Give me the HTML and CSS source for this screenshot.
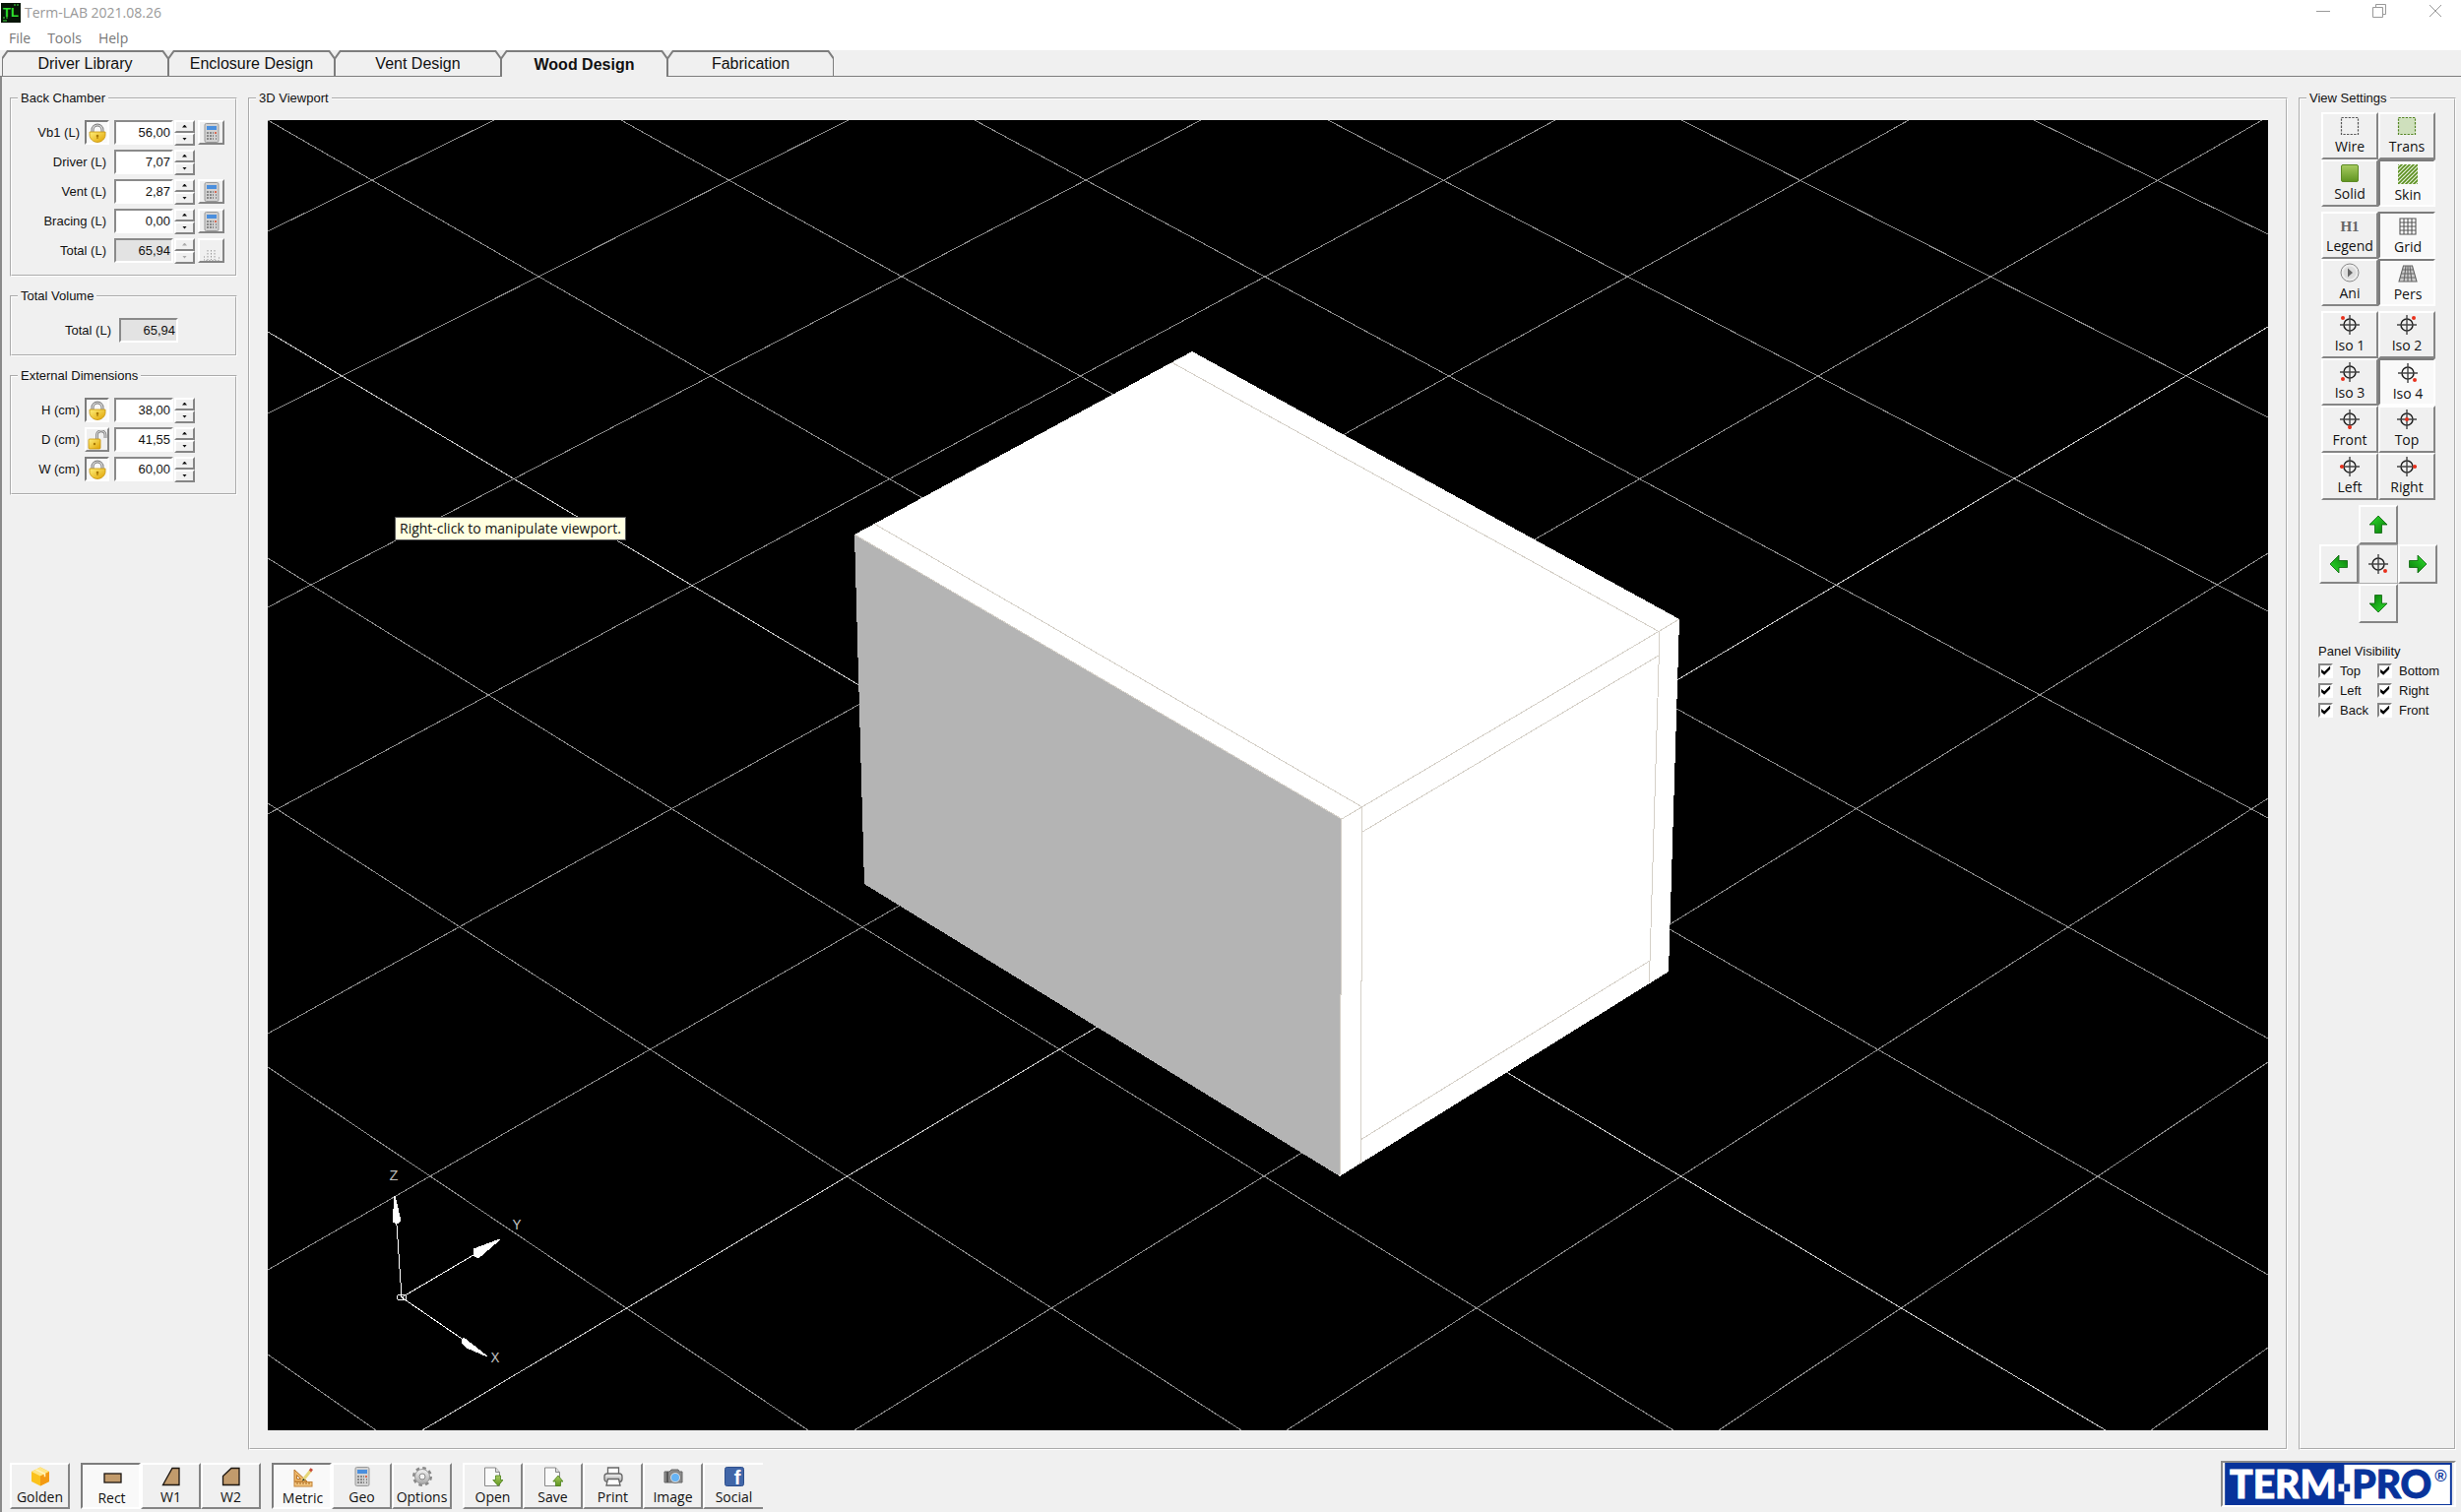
FILE: index.html
```html
<!DOCTYPE html>
<html lang="en">

<head>
    <meta charset="UTF-8">
    <meta name="viewport" content="width=device-width, initial-scale=1.0">
    <title>Term-LAB 2021.08.26</title>
    <link rel="stylesheet" href="styles.css">
</head>

<body>
    <!-- shared icons -->
    <svg class="defs" aria-hidden="true">
        <defs>
            <linearGradient id="gold" x1="0" y1="0" x2="1" y2="1">
                <stop offset="0" stop-color="#ffef7a" />
                <stop offset="1" stop-color="#dfa100" />
            </linearGradient>
            <linearGradient id="green" x1="0" y1="0" x2="0" y2="1">
                <stop offset="0" stop-color="#a9cc62" />
                <stop offset="1" stop-color="#5f9420" />
            </linearGradient>
            <linearGradient id="arrowfill" x1="0" y1="0" x2="1" y2="1">
                <stop offset="0" stop-color="#2fe02f" />
                <stop offset="1" stop-color="#087808" />
            </linearGradient>
            <linearGradient id="silver" x1="0" y1="0" x2="0" y2="1">
                <stop offset="0" stop-color="#f4f4f4" />
                <stop offset="1" stop-color="#a8a8a8" />
            </linearGradient>
            <pattern id="hatch" width="4" height="4" patternUnits="userSpaceOnUse">
                <path d="M-1 1l2-2M0 4l4-4M3 5l2-2" stroke="#5b8f1e" stroke-width="1.6" />
            </pattern>
            <symbol id="lock" viewBox="0 0 20 20">
                <path d="M5 10V7a5 5 0 0 1 10 0v3" fill="none" stroke="#777" stroke-width="3" />
                <path d="M5 10V7a5 5 0 0 1 10 0v3" fill="none" stroke="#ddd" stroke-width="1.2" />
                <path d="M2 9h16v3c0 4-4 7.500-8 7.500S2 16 2 12z" fill="url(#gold)" stroke="#c79208" stroke-width=".8" />
                <circle cx="10" cy="13" r="1.300" fill="#a87800" />
                <path d="M10 13v3" stroke="#a87800" stroke-width="1.200" />
            </symbol>
            <symbol id="unlock" viewBox="0 0 20 20">
                <path d="M9.500 9V5a4.200 4.200 0 0 1 8.500 0v3" fill="none" stroke="#777" stroke-width="2.800" />
                <path d="M9.500 9V5a4.200 4.200 0 0 1 8.500 0v3" fill="none" stroke="#ddd" stroke-width="1.200" />
                <rect x="1" y="9" width="12" height="10" rx="1" fill="url(#gold)" stroke="#c79208" stroke-width=".8" />
                <circle cx="7" cy="14" r="1.200" fill="#a87800" />
            </symbol>
            <symbol id="calc" viewBox="0 0 20 20">
                <rect x="3" y=".5" width="14" height="19" rx="1.500" fill="#d2d2d2" stroke="#999" />
                <rect x="5" y="3" width="10" height="4" fill="#4b8fdd" />
                <path d="M5 10h2m1 0h2m1 0h1m2 0h1M5 13h2m1 0h2m1 0h1m2 0h1M5 16h2m1 0h2m1 0h1m2 0h1" stroke="#888" stroke-width="2" />
                <path d="M13 10h2" stroke="#d86b55" stroke-width="2" />
            </symbol>
            <symbol id="calc-off" viewBox="0 0 20 20">
                <path d="M6 9v10M9.500 9v10M13 9v10" stroke="#999" stroke-dasharray="1.500 1.500" />
                <path d="M2.500 15v4.500h15V15" fill="none" stroke="#bbb" stroke-dasharray="2 1" />
            </symbol>
            <symbol id="wire" viewBox="0 0 20 20">
                <rect x="1.500" y="1.500" width="17" height="17" fill="none" stroke="#555" stroke-width="1.200" stroke-dasharray="2.300 1.300" />
            </symbol>
            <symbol id="trans" viewBox="0 0 20 20">
                <rect x="1.500" y="1.500" width="17" height="17" fill="#cfe0bd" stroke="#538522" stroke-width="1.200" stroke-dasharray="2.300 1.300" />
            </symbol>
            <symbol id="solid" viewBox="0 0 20 20">
                <rect x="1.500" y="1.500" width="17" height="17" rx="1.500" fill="url(#green)" stroke="#5d8b25" />
            </symbol>
            <symbol id="skin" viewBox="0 0 20 20">
                <rect width="20" height="20" fill="#e7efdc" />
                <rect width="20" height="20" fill="url(#hatch)" />
            </symbol>
            <symbol id="legend" viewBox="0 0 20 20">
                <text class="glyph-legend" x="10" y="16" text-anchor="middle">H1</text>
            </symbol>
            <symbol id="grid" viewBox="0 0 20 20">
                <path d="M2 2h16v16H2zM6 2v16M10 2v16M14 2v16M2 6h16M2 10h16M2 14h16" fill="#fff" stroke="#555" stroke-width="1.100" />
            </symbol>
            <symbol id="pers" viewBox="0 0 20 20">
                <path d="M5.500 2h9L19 18H1zM8 2L6 18M10 2v16M12 2l2 16M4.500 6h11M3.500 10h13M2.500 14h15" fill="#ccc" stroke="#666" stroke-width="1.100" />
            </symbol>
            <symbol id="play" viewBox="0 0 20 20">
                <circle cx="10" cy="10" r="9" fill="#eee" stroke="#888" />
                <circle cx="10" cy="10" r="6.500" fill="#ddd" />
                <path d="M8 5.500l5 4.500-5 4.500z" fill="#666" />
            </symbol>
            <symbol id="target" viewBox="0 0 20 20">
                <circle cx="10" cy="10" r="6" fill="none" stroke="#222" stroke-width="1.500" />
                <path d="M10 0v20M0 10h20" stroke="#444" stroke-width="1.400" />
            </symbol>
            <symbol id="arrow" viewBox="0 0 20 20">
                <path d="M10 1l9 9h-5.500v8.500h-7V10H1z" fill="url(#arrowfill)" stroke="#0a650a" stroke-width=".8" />
            </symbol>
            <symbol id="golden" viewBox="0 0 20 20">
                <path d="M10 .5l9 4.500v10l-9 4.500L1 15V5z" fill="#fbc21c" />
                <path d="M10 .5l9 4.500-9 4.500L1 5z" fill="#ffe684" />
                <path d="M10 9.500l9-4.500v10l-9 4.500z" fill="#f39a13" />
                <path d="M5.500 2.800l9 4.500v3" fill="none" stroke="#fff4bd" stroke-width="1.500" />
            </symbol>
            <symbol id="rect" viewBox="0 0 20 20">
                <rect x="2" y="6" width="17" height="9" fill="#c29b6c" stroke="#1b1510" stroke-width="1.300" />
            </symbol>
            <symbol id="w1" viewBox="0 0 20 20">
                <path d="M11 1.500h7v17H1.500z" fill="#c29b6c" stroke="#1b1510" stroke-width="1.300" />
            </symbol>
            <symbol id="w2" viewBox="0 0 20 20">
                <path d="M10 1.500h8v17H1.500V9.500z" fill="#c29b6c" stroke="#1b1510" stroke-width="1.300" />
            </symbol>
            <symbol id="metric" viewBox="0 0 20 20">
                <path d="M1 2l13 12H1z" fill="#f0b96a" stroke="#b8742a" />
                <path d="M3.500 7.500l4 4h-4z" fill="#f8f8f8" stroke="#b8742a" />
                <rect x="1" y="14.500" width="18" height="4.500" fill="#f3c680" stroke="#c38336" />
                <path d="M4 15v2m3-2v2m3-2v2m3-2v2m3-2v2" stroke="#a5651e" />
                <path d="M9.500 13l8-10" stroke="#e6d77a" stroke-width="3" />
                <path d="M17 3.500l1.800-2.300" stroke="#c94c3a" stroke-width="3" />
                <path d="M9 13.500l1-2.500 2 1.500z" fill="#222" />
            </symbol>
            <symbol id="gear" viewBox="0 0 20 20">
                <circle cx="10" cy="10" r="8" fill="none" stroke="#888" stroke-width="4" stroke-dasharray="3.300 2.983" />
                <circle cx="10" cy="10" r="7.500" fill="url(#silver)" stroke="#999" />
                <circle cx="10" cy="10" r="3" fill="#f4f4f4" stroke="#888" />
            </symbol>
            <symbol id="open" viewBox="0 0 20 20">
                <path d="M1.500 1h11l4 4.500v14h-15z" fill="#fafafa" stroke="#888" />
                <path d="M12.500 1v4.500h4" fill="#ddd" stroke="#888" />
                <path d="M12.500 9h5v4.500h2.500L15 19.500 9.800 13.500h2.700z" fill="url(#green)" stroke="#4a8218" stroke-width=".8" />
            </symbol>
            <symbol id="save" viewBox="0 0 20 20">
                <path d="M1.500 1h11l4 4.500v14h-15z" fill="#fafafa" stroke="#888" />
                <path d="M12.500 1v4.500h4" fill="#ddd" stroke="#888" />
                <path d="M12.500 19.500h5V15H20l-5-6-5.200 6h2.700z" fill="url(#green)" stroke="#4a8218" stroke-width=".8" />
            </symbol>
            <symbol id="print" viewBox="0 0 20 20">
                <path d="M4.500 8V1h11v7" fill="#fff" stroke="#666" stroke-width="1.300" />
                <rect x="1" y="7" width="18" height="8.500" rx="3" fill="url(#silver)" stroke="#666" stroke-width="1.300" />
                <path d="M4.500 12.500h11l1.500 6.500H3z" fill="#fff" stroke="#666" stroke-width="1.300" />
            </symbol>
            <symbol id="camera" viewBox="0 0 20 20">
                <path d="M1 5h5l2-2h7l1 2h3v11H1z" fill="#8b8b8b" stroke="#666" />
                <path d="M4 5v11" stroke="#555" stroke-width="2" />
                <circle cx="12" cy="11" r="5.500" fill="#dedede" stroke="#777" />
                <circle cx="12" cy="11" r="4" fill="#66b3f4" />
            </symbol>
            <symbol id="facebook" viewBox="0 0 20 20">
                <rect x=".5" y=".5" width="19" height="19" rx="2" fill="#4166a8" stroke="#2e4f8c" />
                <text class="glyph-f" x="13" y="18" text-anchor="middle">f</text>
            </symbol>
        </defs>
    </svg>

    <header class="titlebar">
        <svg class="app-icon" viewBox="0 0 20 20">
            <rect width="20" height="20" fill="#061406" />
            <path d="M13 2h2m1 0h2M2 15h2m1 0h2M2 18h4" stroke="#2d9a2d" stroke-width="1.500" />
            <text class="glyph-app" x="10" y="14" text-anchor="middle">TL</text>
        </svg>
        <span class="title">Term-LAB 2021.08.26</span>
        <div class="window-buttons">
            <button aria-label="Minimize"><svg viewBox="0 0 14 14"><path d="M0 7.500h14" /></svg></button>
            <button aria-label="Restore"><svg viewBox="0 0 14 14"><path d="M.5 3.500h10v10H.5zM3.500 3.500v-3h10v10h-3" /></svg></button>
            <button aria-label="Close"><svg viewBox="0 0 14 14"><path d="M1 1l12 12M13 1L1 13" /></svg></button>
        </div>
    </header>
    <nav class="menubar">
        <button>File</button>
        <button>Tools</button>
        <button>Help</button>
    </nav>
    <div class="tabs" role="tablist">
        <button class="tab" role="tab">Driver Library</button>
        <button class="tab" role="tab">Enclosure Design</button>
        <button class="tab" role="tab">Vent Design</button>
        <button class="tab active" role="tab" aria-selected="true">Wood Design</button>
        <button class="tab" role="tab">Fabrication</button>
    </div>

    <main class="page">
        <aside class="left">
            <fieldset class="group">
                <legend>Back Chamber</legend>
                <div class="row">
                    <div class="name"><label for="vb1">Vb1 (L)</label><button class="btn lock pressed" aria-label="Lock Vb1"><svg><use href="#lock" /></svg></button></div>
                    <input class="value" id="vb1" type="text" value="56,00">
                    <div class="spin"><button aria-label="Up"></button><button aria-label="Down"></button></div>
                    <button class="btn calc" aria-label="Calculate Vb1"><svg><use href="#calc" /></svg></button>
                </div>
                <div class="row">
                    <div class="name"><label for="driver">Driver (L)</label></div>
                    <input class="value" id="driver" type="text" value="7,07">
                    <div class="spin"><button aria-label="Up"></button><button aria-label="Down"></button></div>
                </div>
                <div class="row">
                    <div class="name"><label for="vent">Vent (L)</label></div>
                    <input class="value" id="vent" type="text" value="2,87">
                    <div class="spin"><button aria-label="Up"></button><button aria-label="Down"></button></div>
                    <button class="btn calc" aria-label="Calculate vent"><svg><use href="#calc" /></svg></button>
                </div>
                <div class="row">
                    <div class="name"><label for="bracing">Bracing (L)</label></div>
                    <input class="value" id="bracing" type="text" value="0,00">
                    <div class="spin"><button aria-label="Up"></button><button aria-label="Down"></button></div>
                    <button class="btn calc" aria-label="Calculate bracing"><svg><use href="#calc" /></svg></button>
                </div>
                <div class="row">
                    <div class="name"><label for="total1">Total (L)</label></div>
                    <input class="value" id="total1" type="text" value="65,94" readonly>
                    <div class="spin"><button aria-label="Up" disabled></button><button aria-label="Down" disabled></button></div>
                    <button class="btn calc" aria-label="Calculate total" disabled><svg><use href="#calc-off" /></svg></button>
                </div>
            </fieldset>

            <fieldset class="group">
                <legend>Total Volume</legend>
                <div class="row">
                    <div class="name wide"><label for="total2">Total (L)</label></div>
                    <input class="value" id="total2" type="text" value="65,94" readonly>
                </div>
            </fieldset>

            <fieldset class="group">
                <legend>External Dimensions</legend>
                <div class="row">
                    <div class="name"><label for="dimh">H (cm)</label><button class="btn lock pressed" aria-label="Lock height"><svg><use href="#lock" /></svg></button></div>
                    <input class="value" id="dimh" type="text" value="38,00">
                    <div class="spin"><button aria-label="Up"></button><button aria-label="Down"></button></div>
                </div>
                <div class="row">
                    <div class="name"><label for="dimd">D (cm)</label><button class="btn lock" aria-label="Lock depth"><svg><use href="#unlock" /></svg></button></div>
                    <input class="value" id="dimd" type="text" value="41,55">
                    <div class="spin"><button aria-label="Up"></button><button aria-label="Down"></button></div>
                </div>
                <div class="row">
                    <div class="name"><label for="dimw">W (cm)</label><button class="btn lock pressed" aria-label="Lock width"><svg><use href="#lock" /></svg></button></div>
                    <input class="value" id="dimw" type="text" value="60,00">
                    <div class="spin"><button aria-label="Up"></button><button aria-label="Down"></button></div>
                </div>
            </fieldset>
        </aside>

        <fieldset class="group center">
            <legend>3D Viewport</legend>
            <div class="viewport">
                <svg class="scene" viewBox="272 122 2032 1331" preserveAspectRatio="xMidYMid slice">
                    <!-- floor grid -->
                    <path class="floor" d="M272 122L2304 1295M631 122L2304 1055M990 122L2304 831M1349 122L2304 621M1708 122L2304 424M2066 122L2304 238M272 567L1700 1453M272 816L1261 1453M272 1084L821 1453M272 1376L382 1453" />
                    <path class="floor" d="M502 122L272 235M862 122L272 420M1220 122L272 617M1580 122L272 827M1939 122L272 1050M2298 122L272 1290M2304 562L868 1453M2304 811L1307 1453M2304 1079L1746 1453M2304 1369L2185 1453" />
                    <path class="floor main" d="M272 337L2139 1453M2304 332L429 1453" />
                    <!-- enclosure -->
                    <path fill="#fff" d="M1211 357L1706 629 1695 987 1361 1195 878 898 868 543z" />
                    <path fill="#b4b4b4" d="M868 543L1363 832 1361 1195 878 898z" />
                    <path class="edge" d="M1190 368L1686 642L1676 976L1675 999M888 532L1384 820L1382 1182M1363 832L1706 629M1685 666L1384 845M1676 976L1382 1158M868 543L1363 832L1361 1195" />
                    <!-- axes -->
                    <g class="axes">
                        <path d="M408 1318L401 1215M408 1318L508 1259M408 1318L494 1377" />
                        <path class="tip" d="M401 1215l6 25-3 3-5-2zM508 1259l-27 10 1 7 4 2zM495 1378l-24-19-2 5 5 5z" />
                        <ellipse cx="408" cy="1318" rx="5" ry="3" />
                        <text x="400" y="1199">Z</text>
                        <text x="525" y="1249">Y</text>
                        <text x="503" y="1384">X</text>
                    </g>
                </svg>
                <div class="tooltip" role="tooltip">Right-click to manipulate viewport.</div>
            </div>
        </fieldset>

        <fieldset class="group right">
            <legend>View Settings</legend>
            <div class="tools">
                <button class="btn tool"><svg><use href="#wire" /></svg>Wire</button>
                <button class="btn tool"><svg><use href="#trans" /></svg>Trans</button>
                <button class="btn tool"><svg><use href="#solid" /></svg>Solid</button>
                <button class="btn tool pressed"><svg><use href="#skin" /></svg>Skin</button>
            </div>
            <div class="tools">
                <button class="btn tool"><svg><use href="#legend" /></svg>Legend</button>
                <button class="btn tool pressed"><svg><use href="#grid" /></svg>Grid</button>
                <button class="btn tool"><svg><use href="#play" /></svg>Ani</button>
                <button class="btn tool pressed"><svg><use href="#pers" /></svg>Pers</button>
            </div>
            <div class="tools">
                <button class="btn tool"><svg viewBox="0 0 20 20"><use href="#target" /><circle class="dot" cx="3" cy="3" r="2" /></svg>Iso 1</button>
                <button class="btn tool"><svg viewBox="0 0 20 20"><use href="#target" /><circle class="dot" cx="17" cy="3" r="2" /></svg>Iso 2</button>
                <button class="btn tool"><svg viewBox="0 0 20 20"><use href="#target" /><circle class="dot" cx="3" cy="17" r="2" /></svg>Iso 3</button>
                <button class="btn tool pressed"><svg viewBox="0 0 20 20"><use href="#target" /><circle class="dot" cx="17" cy="17" r="2" /></svg>Iso 4</button>
                <button class="btn tool"><svg viewBox="0 0 20 20"><use href="#target" /><circle class="dot" cx="10" cy="18" r="2" /></svg>Front</button>
                <button class="btn tool"><svg viewBox="0 0 20 20"><use href="#target" /><circle class="dot" cx="10" cy="10" r="2" /></svg>Top</button>
                <button class="btn tool"><svg viewBox="0 0 20 20"><use href="#target" /><circle class="dot" cx="2" cy="10" r="2" /></svg>Left</button>
                <button class="btn tool"><svg viewBox="0 0 20 20"><use href="#target" /><circle class="dot" cx="18" cy="10" r="2" /></svg>Right</button>
            </div>
            <div class="pad">
                <button class="btn up" aria-label="Rotate up"><svg><use href="#arrow" /></svg></button>
                <button class="btn west" aria-label="Rotate left"><svg><use href="#arrow" /></svg></button>
                <button class="btn home" aria-label="Reset view"><svg viewBox="0 0 20 20"><use href="#target" /><circle class="dot" cx="17" cy="17" r="2" /></svg></button>
                <button class="btn east" aria-label="Rotate right"><svg><use href="#arrow" /></svg></button>
                <button class="btn down" aria-label="Rotate down"><svg><use href="#arrow" /></svg></button>
            </div>
            <div class="panels">
                <span class="caption">Panel Visibility</span>
                <label><input type="checkbox" checked>Top</label>
                <label><input type="checkbox" checked>Bottom</label>
                <label><input type="checkbox" checked>Left</label>
                <label><input type="checkbox" checked>Right</label>
                <label><input type="checkbox" checked>Back</label>
                <label><input type="checkbox" checked>Front</label>
            </div>
        </fieldset>
    </main>

    <footer class="toolbar">
        <div class="set">
            <button class="btn tool"><svg><use href="#golden" /></svg>Golden</button>
        </div>
        <div class="set">
            <button class="btn tool pressed"><svg><use href="#rect" /></svg>Rect</button>
            <button class="btn tool"><svg><use href="#w1" /></svg>W1</button>
            <button class="btn tool"><svg><use href="#w2" /></svg>W2</button>
        </div>
        <div class="set">
            <button class="btn tool pressed"><svg><use href="#metric" /></svg>Metric</button>
            <button class="btn tool"><svg><use href="#calc" /></svg>Geo</button>
            <button class="btn tool"><svg><use href="#gear" /></svg>Options</button>
        </div>
        <div class="set">
            <button class="btn tool"><svg><use href="#open" /></svg>Open</button>
            <button class="btn tool"><svg><use href="#save" /></svg>Save</button>
            <button class="btn tool"><svg><use href="#print" /></svg>Print</button>
            <button class="btn tool"><svg><use href="#camera" /></svg>Image</button>
            <button class="btn tool last"><svg><use href="#facebook" /></svg>Social</button>
        </div>
        <svg class="logo" viewBox="0 0 236 44" role="img" aria-label="TERM-PRO">
            <rect width="236" height="44" fill="#08339b" />
            <rect x="124" y="2" width="110" height="41" fill="#fff" />
            <rect x="118" y="22" width="6" height="8" fill="#fff" />
            <rect x="124" y="22" width="6" height="8" fill="#08339b" />
            <text class="logo-text light" x="5" y="37">TERM</text>
            <text class="logo-text" x="132" y="37">PRO</text>
            <text class="logo-mark" x="218" y="19">®</text>
        </svg>
    </footer>
</body>

</html>
```
FILE: styles.css
```css
* {
    margin: 0;
    padding: 0;
    box-sizing: border-box;
}

body {
    display: flex;
    flex-direction: column;
    min-height: 100vh;
    background: #f0f0f0;
    color: #111;
    font-family: "Liberation Sans", Arial, sans-serif;
    font-size: 13px;
}

button {
    border: 0;
    background: none;
    color: inherit;
    font: inherit;
}

.defs {
    position: absolute;
    width: 0;
    height: 0;
}

/* title and menu */
.titlebar {
    display: flex;
    align-items: center;
    height: 25px;
    padding-left: 1px;
    background: #fff;
}

.app-icon {
    width: 20px;
    height: 20px;
}

.glyph-app {
    font: bold 13px "Liberation Sans", sans-serif;
    fill: #2fe02f;
}

.title {
    padding-left: 4px;
    color: #999;
    font-family: "Open Sans", sans-serif;
    font-size: 14px;
}

.window-buttons {
    display: flex;
    gap: 5px;
    margin-left: auto;
}

.window-buttons button {
    width: 52px;
    height: 24px;
}

.window-buttons svg {
    width: 14px;
    height: 14px;
    fill: none;
    stroke: #999;
}

.menubar {
    display: flex;
    gap: 1px;
    height: 26px;
    padding-left: 1px;
    background: #fff;
}

.menubar button {
    padding: 0 8px;
    color: #777;
    font-family: "Open Sans", sans-serif;
    font-size: 14px;
}

/* tabs */
.tabs {
    display: flex;
    height: 27px;
    padding-left: 2px;
    border-bottom: 1px solid #7d7d7d;
}

.tab {
    position: relative;
    z-index: 0;
    width: 169px;
    height: 26px;
    background: #7d7d7d;
    font-size: 16px;
    line-height: 28px;
}

.tab,
.tab::before {
    clip-path: polygon(0 100%, 0 7px, 5px 0, calc(100% - 5px) 0, 100% 7px, 100% 100%);
}

.tab::before {
    content: "";
    position: absolute;
    z-index: -1;
    inset: 2px 1px 0 1px;
    background: #f0f0f0;
}

.tab.active {
    height: 27px;
    font-weight: bold;
    line-height: 30px;
}

/* page */
.page {
    display: flex;
    flex: 1;
    gap: 11px;
    padding: 14px 5px 0 8px;
    border-left: 2px solid #8a8a8a;
}

.left {
    display: flex;
    flex-direction: column;
    gap: 12px;
    width: 231px;
}

.group {
    min-width: 0;
    border: 2px groove #fff;
}

.left .group {
    padding: 14px 0 12px;
}

legend {
    margin-left: 6px;
    padding: 0 3px;
    line-height: 16px;
}

.row {
    display: flex;
    align-items: center;
    height: 25px;
}

.row + .row {
    margin-top: 5px;
}

.name {
    display: flex;
    justify-content: flex-end;
    align-items: center;
    gap: 5px;
    width: 104px;
    padding-right: 5px;
}

.name label:only-child {
    padding-right: 3px;
}

.name.wide {
    width: 109px;
}

.value {
    width: 60px;
    height: 25px;
    padding-right: 1px;
    border: 2px solid;
    border-color: #8a8a8a #fff #fff #8a8a8a;
    background: #fff;
    color: #111;
    font: inherit;
    text-align: right;
}

.value:read-only {
    background: #e3e3e3;
}

.btn {
    display: flex;
    justify-content: center;
    align-items: center;
    border: 2px solid;
    border-color: #fff #858585 #858585 #fff;
    background: #f0f0f0;
}

.pressed {
    border-color: #7c7c7c #fff #fff #7c7c7c;
    background: #f9f9f9;
}

.lock {
    width: 25px;
    height: 25px;
}

.calc {
    width: 27px;
    height: 25px;
    margin-left: 3px;
}

.lock svg,
.calc svg {
    width: 20px;
    height: 20px;
}

.spin {
    display: grid;
    grid-template-rows: 13px 13px;
    width: 21px;
    margin-left: 1px;
}

.spin button {
    display: flex;
    justify-content: center;
    align-items: center;
    border: 2px solid;
    border-color: #fff #858585 #858585 #fff;
}

.spin button::before {
    content: "";
    width: 5px;
    height: 3px;
    background: #111;
    clip-path: polygon(50% 0, 100% 100%, 0 100%);
}

.spin button:last-child::before {
    clip-path: polygon(0 0, 100% 0, 50% 100%);
}

.spin button:disabled::before {
    background: #aaa;
}

/* 3d viewport */
.center {
    display: flex;
    flex: 1;
    padding: 14px 0 18px;
}

.viewport {
    position: relative;
    display: flex;
    flex: 1;
    min-width: 0;
    margin: 0 18px;
    background: #000;
}

.scene {
    flex: 1;
    min-width: 0;
    shape-rendering: crispEdges;
}

.floor {
    fill: none;
    stroke: #8c8c8c;
}

.floor.main {
    stroke: #c8c8c8;
}

.edge {
    fill: none;
    stroke: #d5d0c8;
}

.axes {
    fill: none;
    stroke: #fff;
}

.axes .tip {
    fill: #fff;
}

.axes text {
    fill: #bbb;
    stroke: none;
    font: 15px "Liberation Mono", monospace;
    text-anchor: middle;
}

.tooltip {
    position: absolute;
    top: 403px;
    left: 129px;
    padding: 0 4px;
    border: 1px solid #555;
    background: #ffffe1;
    font-family: "Open Sans", sans-serif;
    font-size: 14px;
    line-height: 22px;
    white-space: nowrap;
}

/* view settings */
.right {
    width: 160px;
    padding-top: 6px;
}

.tools {
    display: grid;
    grid-template-columns: 58px 58px;
    grid-auto-rows: 48px;
    margin: 0 0 5px 21px;
}

.tool {
    flex-direction: column;
    justify-content: flex-start;
    padding-top: 2px;
    font-family: "Open Sans", sans-serif;
    font-size: 14px;
    line-height: 22px;
}

.tool.pressed {
    padding: 3px 0 0 2px;
}

.tool svg,
.pad svg {
    flex: none;
    width: 20px;
    height: 20px;
}

.dot {
    fill: #e8301c;
}

.glyph-legend {
    font: bold 15px "Liberation Serif", serif;
    fill: #666;
}

.glyph-f {
    font: bold 20px "Liberation Sans", sans-serif;
    fill: #fff;
}

.pad {
    display: grid;
    grid-template-areas: ". up ." "west home east" ". down .";
    grid-template-columns: 40px 40px 40px;
    grid-auto-rows: 40px;
    margin-left: 19px;
}

.up {
    grid-area: up;
}

.west {
    grid-area: west;
}

.home {
    grid-area: home;
    border: 1px solid #aaa;
}

.east {
    grid-area: east;
}

.down {
    grid-area: down;
}

.west svg {
    transform: rotate(-90deg);
}

.east svg {
    transform: rotate(90deg);
}

.down svg {
    transform: rotate(180deg);
}

.panels {
    display: grid;
    grid-template-columns: 60px 64px;
    grid-auto-rows: 20px;
    align-items: center;
    margin: 18px 0 0 18px;
}

.caption {
    grid-column: 1 / -1;
}

.panels label {
    display: flex;
    align-items: center;
    gap: 7px;
}

.panels input {
    appearance: none;
    width: 15px;
    height: 15px;
    border: 2px solid;
    border-color: #858585 #fff #fff #858585;
    background: #fff;
}

.panels input:checked::before {
    content: "";
    display: block;
    width: 11px;
    height: 11px;
    background: #000;
    clip-path: polygon(10% 40%, 38% 62%, 92% 8%, 92% 38%, 38% 94%, 10% 70%);
}

/* bottom toolbar */
.toolbar {
    display: flex;
    gap: 11px;
    padding: 13px 5px 3px 8px;
    border-left: 2px solid #8a8a8a;
}

.set {
    display: flex;
}

.set .tool {
    width: 61px;
    height: 47px;
}

.set .last {
    border-right: 0;
}

.logo {
    width: 239px;
    height: 47px;
    margin-left: auto;
    margin-top: -2px;
    border: 2px solid;
    border-color: #8a8a8a #fff #fff #8a8a8a;
}

.logo-text {
    font: 900 40px Lato, sans-serif;
    fill: #08339b;
    stroke: #08339b;
}

.logo-text.light {
    fill: #fff;
    stroke: #fff;
}

.logo-mark {
    font: bold 17px "Liberation Sans", sans-serif;
    fill: #08339b;
}
```
